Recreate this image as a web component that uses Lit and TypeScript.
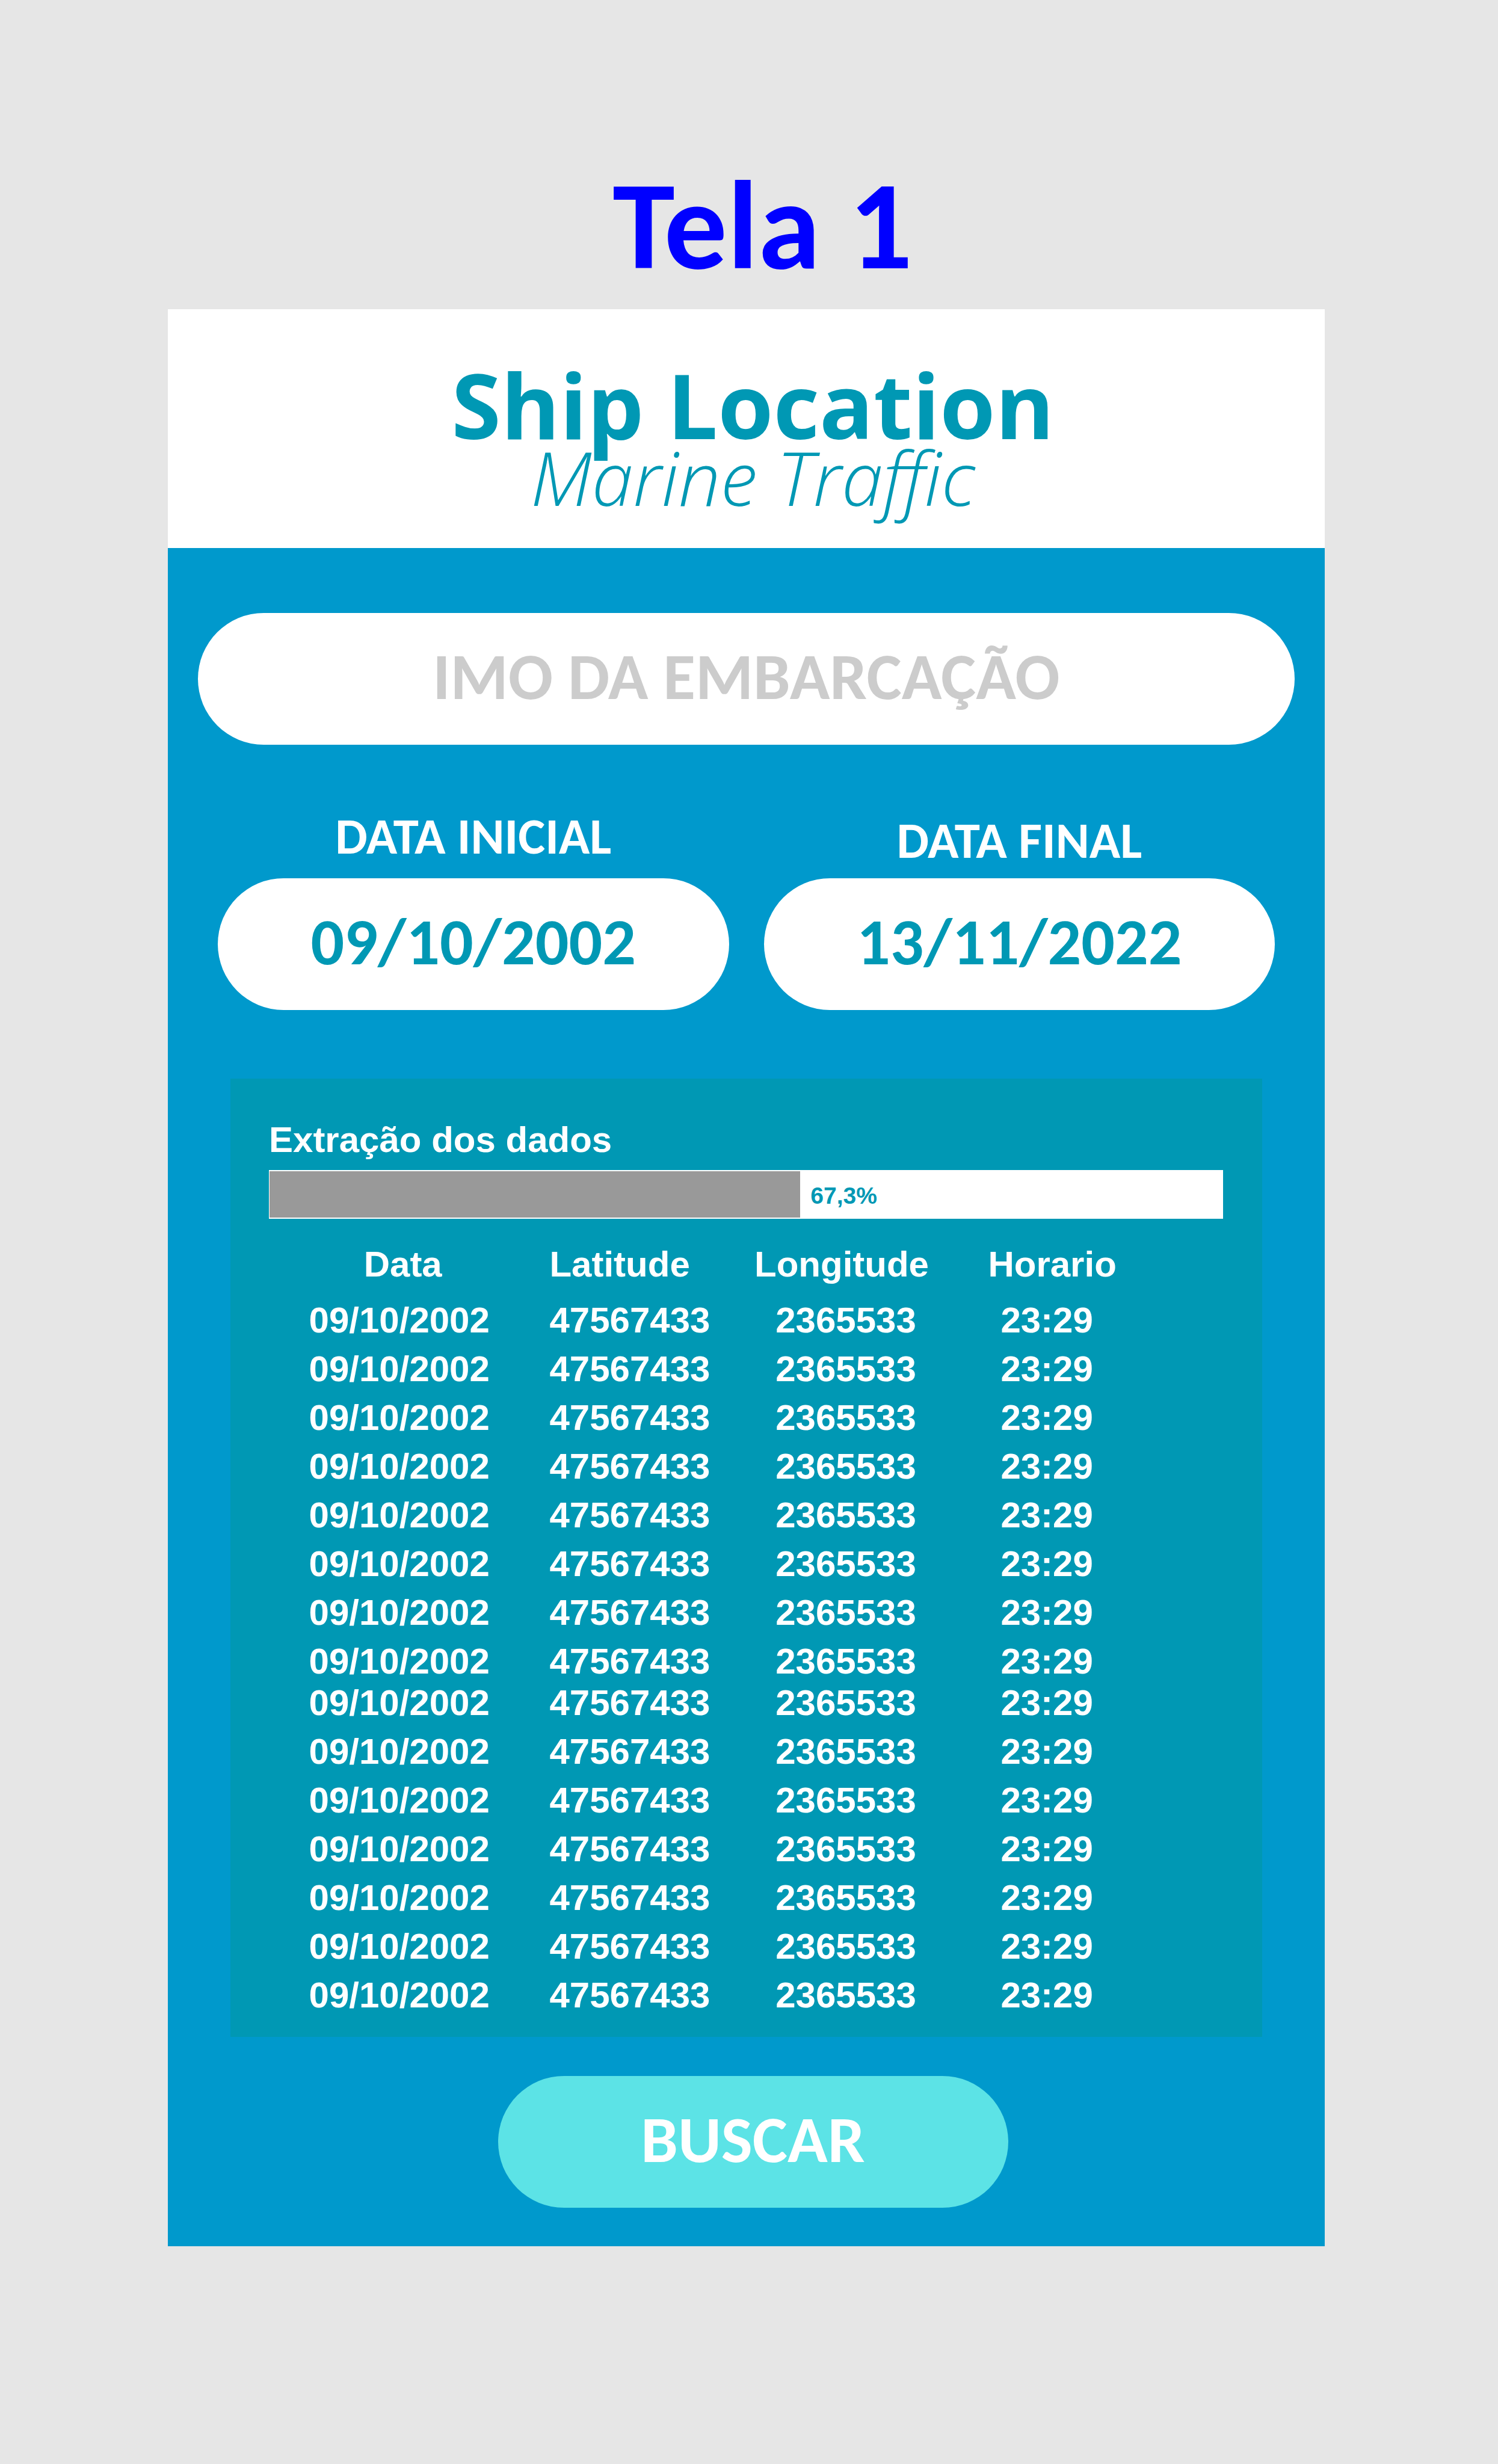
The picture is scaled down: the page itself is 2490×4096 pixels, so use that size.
import { LitElement, html, css } from "lit";
import { customElement, state } from "lit/decorators.js";

interface Position {
  date: string;
  latitude: string;
  longitude: string;
  time: string;
}

const position: Position = {
  date: "09/10/2002",
  latitude: "47567433",
  longitude: "2365533",
  time: "23:29",
};

const batches: Position[][] = [8, 7].map((size) => Array.from({ length: size }, () => position));

@customElement("app-root")
export class AppRoot extends LitElement {
  static styles = css`
    :host {
      --blue: #0099cc;
      --teal: #0098b4;
      --calibri: Carlito, Lato, sans-serif;
      --segoe: "Open Sans", "Noto Sans", sans-serif;
      display: block;
      box-sizing: border-box;
      min-height: 100vh;
      padding: 263px 288px 120px 279px;
      background: #e6e6e6;
      font-family: "Liberation Sans", Arial, sans-serif;
      font-weight: 700;
    }
    * {
      box-sizing: border-box;
    }
    h1,
    h2,
    p {
      margin: 0;
    }
    .title {
      margin-bottom: 27px;
      padding-left: 54px;
      color: #0000ff;
      font: 700 209px/224px var(--calibri);
      text-align: center;
    }
    .card {
      background: var(--blue);
    }
    .brand {
      padding: 95px 0 62px 22px;
      background: #fff;
      color: var(--teal);
      text-align: center;
    }
    .name {
      font: 700 149px/128px var(--segoe);
    }
    .tagline {
      font: italic 300 124px/112px var(--segoe);
    }
    .form {
      padding: 108px 50px 64px;
    }
    .pill {
      display: block;
      width: 100%;
      height: 219px;
      padding: 0 60px 8px;
      border: 0;
      border-radius: 110px;
      background: #fff;
      color: var(--teal);
      font: 700 110px/140px var(--calibri);
      text-align: center;
    }
    .pill::placeholder {
      color: #ccc;
      opacity: 1;
    }
    .dates {
      display: grid;
      grid-template-columns: 1fr 1fr;
      align-items: end;
      gap: 58px;
      margin: 107px 33px 114px;
    }
    .label {
      display: block;
      padding-bottom: 25px;
      color: #fff;
      font: 700 85px/90px var(--calibri);
      text-align: center;
    }
    .label.close {
      padding-bottom: 18px;
    }
    .panel {
      margin: 0 54px 65px;
      padding: 67px 65px 35px 64px;
      background: var(--teal);
      color: #fff;
      font-size: 60px;
    }
    .caption {
      margin-bottom: 15px;
      line-height: 70px;
    }
    .bar {
      display: flex;
      align-items: center;
      gap: 17px;
      height: 81px;
      margin-bottom: 41px;
      padding: 2px 1px;
      background: #fff;
      color: var(--teal);
      font-size: 39px;
    }
    .fill {
      height: 100%;
      background: #999;
    }
    .percent {
      padding-top: 5px;
    }
    .table {
      width: calc(100% - 146px);
      border-collapse: collapse;
      table-layout: fixed;
      line-height: 69px;
      text-align: center;
    }
    .date {
      width: 30.1%;
    }
    .lat {
      width: 23.5%;
    }
    .lon {
      width: 26%;
    }
    th {
      padding: 0 0 24px;
    }
    td {
      padding: 0 0 12px;
    }
    tbody tr:last-child td {
      padding-bottom: 0;
    }
    th.date {
      padding-left: 12px;
    }
    th.lon {
      padding-right: 14px;
    }
    th.time {
      padding-left: 18px;
    }
    .table .lat {
      padding-left: 33px;
      text-align: left;
    }
    .actions {
      display: flex;
      justify-content: center;
      padding-left: 22px;
    }
    .pill.search {
      width: 848px;
      background: #5ce3e6;
      color: #fff;
    }
  `;

  @state() private progress = { label: "67,3%", width: 55.7 };

  private row(p: Position) {
    return html`<tr>
      <td class="date">${p.date}</td>
      <td class="lat">${p.latitude}</td>
      <td class="lon">${p.longitude}</td>
      <td class="time">${p.time}</td>
    </tr>`;
  }

  render() {
    return html`
      <h1 class="title">Tela 1</h1>
      <main class="card">
        <header class="brand">
          <h2 class="name">Ship Location</h2>
          <p class="tagline">Marine Traffic</p>
        </header>
        <form class="form" @submit=${(e: Event) => e.preventDefault()}>
          <input class="pill" type="text" name="imo" placeholder="IMO DA EMBARCAÇÃO" aria-label="IMO DA EMBARCAÇÃO" />
          <div class="dates">
            <div>
              <label class="label" for="start">DATA INICIAL</label>
              <input class="pill" id="start" type="text" .value=${"09/10/2002"} />
            </div>
            <div>
              <label class="label close" for="end">DATA FINAL</label>
              <input class="pill" id="end" type="text" .value=${"13/11/2022"} />
            </div>
          </div>
          <section class="panel">
            <p class="caption" id="caption">Extração dos dados</p>
            <div class="bar" role="progressbar" aria-labelledby="caption" aria-valuetext=${this.progress.label}>
              <div class="fill" style="width: ${this.progress.width}%"></div>
              <span class="percent">${this.progress.label}</span>
            </div>
            <table class="table">
              <thead>
                <tr>
                  <th class="date" scope="col">Data</th>
                  <th class="lat" scope="col">Latitude</th>
                  <th class="lon" scope="col">Longitude</th>
                  <th class="time" scope="col">Horario</th>
                </tr>
              </thead>
              ${batches.map((rows) => html`<tbody>${rows.map((p) => this.row(p))}</tbody>`)}
            </table>
          </section>
          <div class="actions">
            <button class="pill search" type="submit">BUSCAR</button>
          </div>
        </form>
      </main>
    `;
  }
}
